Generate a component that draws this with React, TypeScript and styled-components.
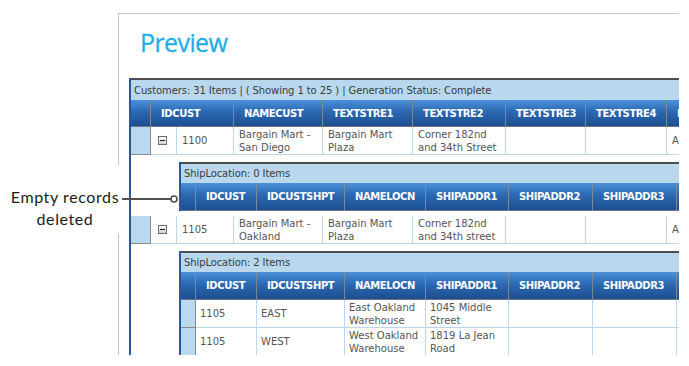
import React from "react";
import styled, { createGlobalStyle } from "styled-components";

const GlobalStyle = createGlobalStyle`
  html, body { margin: 0; padding: 0; background: #fff; }
  body { width: 689px; height: 366px; overflow: hidden; }
`;

const Page = styled.div`
  position: relative;
  width: 689px;
  height: 366px;
  box-sizing: border-box;
  padding: 13px 0 0 118px;
`;

const Frame = styled.div`
  width: 561px;
  height: 342px;
  box-sizing: border-box;
  border-top: 1px solid #c4c4c4;
  border-left: 1px solid #c4c4c4;
  overflow: hidden;
  background: #fff;
`;

const Title = styled.h1`
  margin: 0;
  height: 64px;
  box-sizing: border-box;
  padding: 13px 0 0 21px;
  font-family: "Open Sans", sans-serif;
  font-weight: 400;
  font-size: 25px;
  line-height: 30px;
  letter-spacing: -0.6px;
  color: #1eaee6;
  -webkit-text-stroke: 0.3px #1eaee6;
`;

const GridWrap = styled.div`
  padding-left: 10px;
`;

const Grid = styled.div`
  width: max-content;
  border-left: 2px solid #2458a0;
  font-family: "DejaVu Sans", sans-serif;
  font-size: 10px;
`;

const Caption = styled.div<{ $h: number }>`
  height: ${(p) => p.$h}px;
  box-sizing: border-box;
  border-top: 2px solid #4d4d4d;
  background: #b9d8ee;
  padding-left: 3px;
  display: flex;
  align-items: center;
  letter-spacing: -0.1px;
  color: #3a3a3a;
  white-space: nowrap;
`;

const Row = styled.div<{ $cols: string; $h: number }>`
  display: grid;
  grid-template-columns: ${(p) => p.$cols};
  height: ${(p) => p.$h}px;
`;

const HeadCell = styled.div<{ $span?: number }>`
  grid-column: span ${(p) => p.$span ?? 1};
  box-sizing: border-box;
  background: linear-gradient(#4b90da 0%, #2b69b2 45%, #1c4e90 100%);
  border-right: 1px solid #7d8895;
  border-bottom: 1px solid #6b7786;
  color: #fff;
  font-weight: bold;
  letter-spacing: -0.4px;
  padding-left: 10px;
  display: flex;
  align-items: center;
  white-space: nowrap;
  overflow: hidden;
`;

const Indicator = styled.div`
  box-sizing: border-box;
  background: #bad8ee;
  border-right: 1px solid #8a8a8a;
  border-bottom: 1px solid #8a8a8a;
`;

const Cell = styled.div<{ $pad?: number; $center?: boolean }>`
  box-sizing: border-box;
  border-right: 1px solid #bcd6eb;
  border-bottom: 1px solid #bcd6eb;
  padding: 0 2px 0 ${(p) => p.$pad ?? 5}px;
  display: flex;
  flex-direction: column;
  justify-content: center;
  align-items: ${(p) => (p.$center ? "center" : "flex-start")};
  color: #555;
  line-height: 13px;
  white-space: nowrap;
  overflow: hidden;
`;

const DetailRow = styled.div<{ $top: number; $bottom: number }>`
  padding: ${(p) => p.$top}px 0 ${(p) => p.$bottom}px 48px;
`;

const Callout = styled.div`
  position: absolute;
  left: 8px;
  top: 165px;
  display: flex;
  align-items: flex-start;
`;

const CalloutText = styled.div`
  width: 114px;
  box-sizing: border-box;
  padding: 21px 0 3px;
  background: #fff;
  text-align: center;
  font-family: Lato, sans-serif;
  font-weight: 400;
  font-size: 16px;
  line-height: 22px;
  letter-spacing: 0.6px;
  color: #1a1a1a;
`;

const Connector = styled.svg`
  display: block;
  margin-top: 29px;
`;

const Toggle = () => (
  <svg width="9" height="9" viewBox="0 0 9 9">
    <defs>
      <linearGradient id="tg" x1="0" y1="0" x2="0" y2="1">
        <stop offset="0" stopColor="#fdfdfd" />
        <stop offset="1" stopColor="#cfcfcf" />
      </linearGradient>
    </defs>
    <rect x="0.5" y="0.5" width="8" height="8" fill="url(#tg)" stroke="#6e6e6e" />
    <rect x="2" y="4" width="5" height="1" fill="#1e1e1e" />
  </svg>
);

const MAIN_COLS = "20px 26px 57px 89px 90px 93px 80px 81px 100px";
const SUB_COLS = "15px 61px 88px 81px 83px 84px 84px 100px";

const mainHeads = ["NAMECUST", "TEXTSTRE1", "TEXTSTRE2", "TEXTSTRE3", "TEXTSTRE4", "NAMECITY"];
const subHeads = ["IDCUST", "IDCUSTSHPT", "NAMELOCN", "SHIPADDR1", "SHIPADDR2", "SHIPADDR3", "NAMECTAC"];

type Lines = string[];

const customers: { id: string; cells: Lines[] }[] = [
  {
    id: "1100",
    cells: [
      ["Bargain Mart -", "San Diego"],
      ["Bargain Mart", "Plaza"],
      ["Corner 182nd", "and 34th Street"],
      [],
      [],
      ["Arcadia"],
    ],
  },
  {
    id: "1105",
    cells: [
      ["Bargain Mart -", "Oakland"],
      ["Bargain Mart", "Plaza"],
      ["Corner 182nd", "and 34th street"],
      [],
      [],
      ["Arcadia"],
    ],
  },
];

const shipTo: Lines[][] = [
  [["1105"], ["EAST"], ["East Oakland", "Warehouse"], ["1045 Middle", "Street"], [], [], []],
  [["1105"], ["WEST"], ["West Oakland", "Warehouse"], ["1819 La Jean", "Road"], [], [], []],
];

const Text = ({ lines }: { lines: Lines }) => (
  <>
    {lines.map((l, i) => (
      <span key={i}>{l}</span>
    ))}
  </>
);

const MainRow = ({ id, cells }: { id: string; cells: Lines[] }) => (
  <Row $cols={MAIN_COLS} $h={28}>
    <Indicator />
    <Cell $center $pad={0}>
      <Toggle />
    </Cell>
    <Cell>{id}</Cell>
    {cells.map((c, i) => (
      <Cell key={i}>
        <Text lines={c} />
      </Cell>
    ))}
  </Row>
);

const ShipGrid = ({ rows }: { rows: Lines[][] }) => (
  <Grid>
    <Caption $h={21}>ShipLocation: {rows.length} Items</Caption>
    <Row $cols={SUB_COLS} $h={28}>
      <HeadCell />
      {subHeads.map((h) => (
        <HeadCell key={h} $span={1}>
          {h}
        </HeadCell>
      ))}
    </Row>
    {rows.map((r, i) => (
      <Row key={i} $cols={SUB_COLS} $h={28}>
        <Indicator />
        {r.map((c, j) => (
          <Cell key={j} $pad={4}>
            <Text lines={c} />
          </Cell>
        ))}
      </Row>
    ))}
  </Grid>
);

export default function App() {
  return (
    <Page>
      <GlobalStyle />
      <Frame>
        <Title>Preview</Title>
        <GridWrap>
          <Grid>
            <Caption $h={22}>
              Customers: 31 Items | ( Showing 1 to 25 ) | Generation Status: Complete
            </Caption>
            <Row $cols={MAIN_COLS} $h={27}>
              <HeadCell />
              <HeadCell $span={2}>IDCUST</HeadCell>
              {mainHeads.map((h) => (
                <HeadCell key={h}>{h}</HeadCell>
              ))}
            </Row>
            <MainRow {...customers[0]} />
            <DetailRow $top={7} $bottom={5}>
              <ShipGrid rows={[]} />
            </DetailRow>
            <MainRow {...customers[1]} />
            <DetailRow $top={7} $bottom={0}>
              <ShipGrid rows={shipTo} />
            </DetailRow>
          </Grid>
        </GridWrap>
      </Frame>
      <Callout>
        <CalloutText>
          Empty records
          <br />
          deleted
        </CalloutText>
        <Connector width="57" height="10" viewBox="0 0 57 10">
          <line x1="0" y1="5" x2="49" y2="5" stroke="#505050" strokeWidth="2" />
          <circle cx="52" cy="5" r="3" fill="#fff" stroke="#505050" strokeWidth="1.6" />
        </Connector>
      </Callout>
    </Page>
  );
}
